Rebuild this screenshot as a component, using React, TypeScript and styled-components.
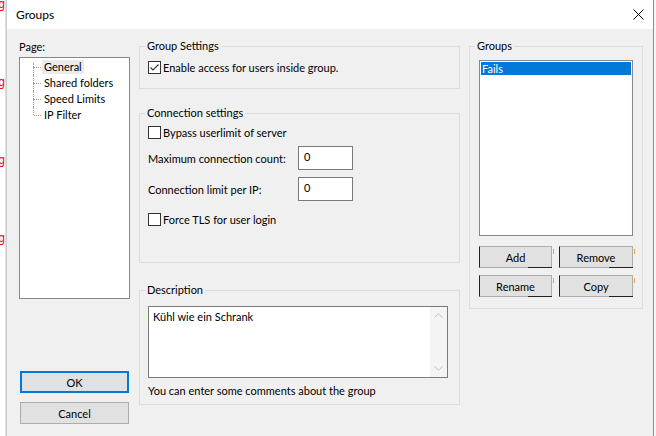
import React from 'react';
import styled, { createGlobalStyle } from 'styled-components';

const FONT = `"Segoe UI", Lato, "Liberation Sans", sans-serif`;

const Global = createGlobalStyle`
  html, body { margin: 0; padding: 0; background: #fff; }
  body { font-family: ${FONT}; font-size: 11px; color: #000; }
  * { box-sizing: border-box; }
`;

const Screen = styled.div`
  display: flex;
  width: 656px;
  height: 436px;
  overflow: hidden;
  background: #fff;
`;

const Backdrop = styled.div`
  width: 5px;
  flex: none;
  overflow: hidden;
  display: flex;
  flex-direction: column;
  margin-top: -2px;
`;

const BackdropGlyph = styled.span`
  height: 78px;
  flex: none;
  margin-left: -2px;
  color: #e81123;
  font: 12px/12px "DejaVu Sans Mono", monospace;
`;

const Shadow = styled.div`
  width: 2px;
  flex: none;
  background: linear-gradient(to right, #e6e6e6, #c4c4c4);
`;

const Window = styled.div`
  width: 647px;
  flex: none;
  display: flex;
  flex-direction: column;
  background: #f0f0f0;
  border-right: 1px solid #8c8c8c;
`;

const RightEdge = styled.div`
  flex: 1;
  background: #f6f6f6;
`;

const TitleBar = styled.div`
  height: 29px;
  flex: none;
  background: #fff;
  display: flex;
  align-items: center;
  justify-content: space-between;
  padding: 0 9px 0 9px;
  font-size: 12px;
`;

const Body = styled.div`
  flex: 1;
  display: flex;
  gap: 9px;
  padding: 0 10px 0 12px;
`;

const LeftColumn = styled.div`
  width: 111px;
  flex: none;
  display: flex;
  flex-direction: column;
`;

const PageLabel = styled.div`
  margin-top: 10px;
  line-height: 16px;
`;

const Tree = styled.div`
  margin-top: 2px;
  height: 242px;
  background: #fff;
  border: 1px solid #828790;
  padding-top: 1px;
`;

const TreeRow = styled.div`
  display: flex;
  height: 16px;
  align-items: stretch;
`;

const Branch = styled.div`
  width: 8px;
  margin-left: 13px;
  display: flex;
  flex-direction: column;
`;

const BranchTop = styled.div<{ $first?: boolean }>`
  height: ${(p) => (p.$first ? '4px' : '8px')};
  margin-top: ${(p) => (p.$first ? '4px' : '0')};
  flex: none;
  border-left: 1px dotted #a0a0a0;
`;

const BranchBottom = styled.div<{ $last?: boolean }>`
  flex: 1;
  border-top: 1px dotted #a0a0a0;
  border-left: ${(p) => (p.$last ? 'none' : '1px dotted #a0a0a0')};
  margin-left: ${(p) => (p.$last ? '1px' : '0')};
`;

const TreeText = styled.span<{ $selected?: boolean }>`
  align-self: center;
  margin-left: 1px;
  padding: 0 2px;
  line-height: 14px;
  background: ${(p) => (p.$selected ? '#ebebeb' : 'transparent')};
`;

const DialogButton = styled.button<{ $default?: boolean; $gap: number }>`
  margin-top: ${(p) => p.$gap}px;
  margin-left: 1px;
  width: 109px;
  height: 22px;
  background: #e1e1e1;
  border: ${(p) => (p.$default ? '2px solid #0078d7' : '1px solid #adadad')};
  font: inherit;
  color: #000;
  padding: 0;
`;

const MiddleColumn = styled.div`
  width: 321px;
  flex: none;
  display: flex;
  flex-direction: column;
`;

const RightColumn = styled.div`
  width: 174px;
  flex: none;
  display: flex;
  flex-direction: column;
`;

const GroupBox = styled.div<{ $top: number; $height: number; $padTop: number; $padLeft?: number }>`
  position: relative;
  margin-top: ${(p) => p.$top}px;
  height: ${(p) => p.$height}px;
  border: 1px solid #dcdcdc;
  padding: ${(p) => p.$padTop}px 0 0 ${(p) => p.$padLeft ?? 8}px;
  display: flex;
  flex-direction: column;
  flex: none;
`;

const Legend = styled.span`
  position: absolute;
  top: -8px;
  left: 5px;
  padding: 0 2px;
  background: #f0f0f0;
  line-height: 14px;
`;

const CheckRow = styled.label<{ $gap?: number }>`
  display: flex;
  align-items: center;
  gap: 2px;
  height: 13px;
  line-height: 13px;
  margin-top: ${(p) => p.$gap ?? 0}px;
`;

const CheckBox = styled.span`
  width: 13px;
  height: 13px;
  flex: none;
  border: 1px solid #333;
  background: #fff;
  display: flex;
  align-items: center;
  justify-content: center;
`;

const FieldRow = styled.div<{ $gap: number }>`
  display: flex;
  align-items: center;
  height: 24px;
  margin-top: ${(p) => p.$gap}px;
`;

const FieldLabel = styled.span`
  width: 150px;
  flex: none;
`;

const NumberInput = styled.div`
  width: 55px;
  height: 24px;
  border: 1px solid #7a7a7a;
  background: #fff;
  padding: 3px 5px;
  line-height: 14px;
`;

const DescArea = styled.div`
  width: 300px;
  height: 72px;
  border: 1px solid #7a7a7a;
  background: #fff;
  display: flex;
  flex: none;
`;

const DescText = styled.div`
  flex: 1;
  padding: 3px 4px;
  line-height: 14px;
`;

const ScrollTrack = styled.div`
  width: 17px;
  flex: none;
  background: #f4f4f4;
  display: flex;
  flex-direction: column;
  justify-content: space-between;
  align-items: center;
  padding: 6px 0 6px;
`;

const HelpText = styled.div`
  margin-top: 6px;
  line-height: 14px;
`;

const ListBox = styled.div`
  width: 154px;
  height: 176px;
  border: 1px solid #828790;
  background: #fff;
  padding: 1px;
  flex: none;
`;

const ListItem = styled.div<{ $selected?: boolean }>`
  height: 13px;
  line-height: 13px;
  padding-left: 1px;
  background: ${(p) => (p.$selected ? '#0078d7' : 'transparent')};
  color: ${(p) => (p.$selected ? '#fff' : '#000')};
`;

const ButtonGrid = styled.div`
  margin-top: 10px;
  display: grid;
  grid-template-columns: 73px 74px;
  column-gap: 7px;
  row-gap: 7px;
`;

const GroupButton = styled.button`
  position: relative;
  height: 22px;
  background: #e1e1e1;
  border: 1px solid #adadad;
  border-left-color: #222;
  font: inherit;
  color: #000;
  padding: 0;
  &::after {
    content: '';
    position: absolute;
    right: -1px;
    bottom: -1px;
    width: 34%;
    height: 1px;
    background: #222;
  }
  &::before {
    content: '';
    position: absolute;
    right: -3px;
    top: 2px;
    width: 1px;
    height: 5px;
    background: #e2a441;
  }
`;

const Check = ({ checked }: { checked?: boolean }) => (
  <CheckBox>
    {checked && (
      <svg width="11" height="11" viewBox="0 0 11 11">
        <path d="M1.5 5.5 L4 8 L9.5 2.5" fill="none" stroke="#333" strokeWidth="1.1" />
      </svg>
    )}
  </CheckBox>
);

const Chevron = ({ up }: { up?: boolean }) => (
  <svg width="9" height="5" viewBox="0 0 9 5">
    <path d={up ? 'M0.5 4.5 L4.5 0.8 L8.5 4.5' : 'M0.5 0.5 L4.5 4.2 L8.5 0.5'} fill="none" stroke="#c2c2c2" strokeWidth="1" />
  </svg>
);

const treeItems = ['General', 'Shared folders', 'Speed Limits', 'IP Filter'];

export default function App() {
  return (
    <>
      <Global />
      <Screen>
        <Backdrop>
          {[0, 1, 2, 3].map((i) => (
            <BackdropGlyph key={i}>g</BackdropGlyph>
          ))}
        </Backdrop>
        <Shadow />
        <Window>
          <TitleBar>
            <span>Groups</span>
            <svg width="11" height="11" viewBox="0 0 11 11">
              <path d="M0.5 0.5 L10.5 10.5 M10.5 0.5 L0.5 10.5" stroke="#000" strokeWidth="1" />
            </svg>
          </TitleBar>
          <Body>
            <LeftColumn>
              <PageLabel>Page:</PageLabel>
              <Tree>
                {treeItems.map((t, i) => (
                  <TreeRow key={t}>
                    <Branch>
                      <BranchTop $first={i === 0} />
                      <BranchBottom $last={i === treeItems.length - 1} />
                    </Branch>
                    <TreeText $selected={i === 0}>{t}</TreeText>
                  </TreeRow>
                ))}
              </Tree>
              <DialogButton $default $gap={72}>OK</DialogButton>
              <DialogButton $gap={9}>Cancel</DialogButton>
            </LeftColumn>

            <MiddleColumn>
              <GroupBox $top={17} $height={43} $padTop={14}>
                <Legend>Group Settings</Legend>
                <CheckRow>
                  <Check checked />
                  <span>Enable access for users inside group.</span>
                </CheckRow>
              </GroupBox>

              <GroupBox $top={24} $height={150} $padTop={12}>
                <Legend>Connection settings</Legend>
                <CheckRow>
                  <Check />
                  <span>Bypass userlimit of server</span>
                </CheckRow>
                <FieldRow $gap={7}>
                  <FieldLabel>Maximum connection count:</FieldLabel>
                  <NumberInput>0</NumberInput>
                </FieldRow>
                <FieldRow $gap={7}>
                  <FieldLabel>Connection limit per IP:</FieldLabel>
                  <NumberInput>0</NumberInput>
                </FieldRow>
                <CheckRow $gap={12}>
                  <Check />
                  <span>Force TLS for user login</span>
                </CheckRow>
              </GroupBox>

              <GroupBox $top={27} $height={115} $padTop={15}>
                <Legend>Description</Legend>
                <DescArea>
                  <DescText>Kühl wie ein Schrank</DescText>
                  <ScrollTrack>
                    <Chevron up />
                    <Chevron />
                  </ScrollTrack>
                </DescArea>
                <HelpText>You can enter some comments about the group</HelpText>
              </GroupBox>
            </MiddleColumn>

            <RightColumn>
              <GroupBox $top={17} $height={263} $padTop={13} $padLeft={9}>
                <Legend>Groups</Legend>
                <ListBox>
                  <ListItem $selected>Fails</ListItem>
                </ListBox>
                <ButtonGrid>
                  <GroupButton>Add</GroupButton>
                  <GroupButton>Remove</GroupButton>
                  <GroupButton>Rename</GroupButton>
                  <GroupButton>Copy</GroupButton>
                </ButtonGrid>
              </GroupBox>
            </RightColumn>
          </Body>
        </Window>
        <RightEdge />
      </Screen>
    </>
  );
}
